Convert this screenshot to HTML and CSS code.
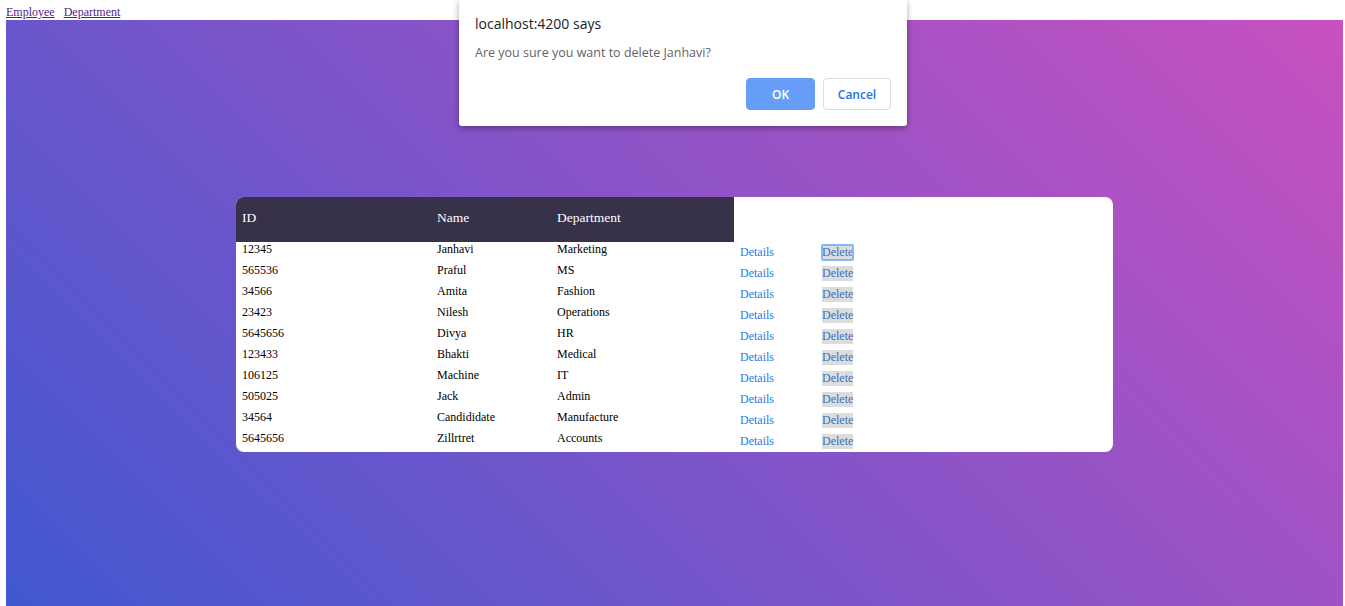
FILE: index.html
```html
<!DOCTYPE html>
<html>
<head>
<meta charset="utf-8">
<link rel="stylesheet" href="styles.css">
</head>
<body>
<nav class="nav">
  <a href="#">Employee</a>
  <a href="#">Department</a>
</nav>
<main class="stage">
  <div class="card">
    <table class="grid">
      <thead>
        <tr><th class="c-id">ID</th><th class="c-name">Name</th><th class="c-dept">Department</th></tr>
      </thead>
      <tbody>
        <tr><td>12345</td><td>Janhavi</td><td>Marketing</td><td class="act"><a href="#">Details</a></td><td class="act"><button class="del focus">Delete</button></td></tr>
        <tr><td>565536</td><td>Praful</td><td>MS</td><td class="act"><a href="#">Details</a></td><td class="act"><button class="del">Delete</button></td></tr>
        <tr><td>34566</td><td>Amita</td><td>Fashion</td><td class="act"><a href="#">Details</a></td><td class="act"><button class="del">Delete</button></td></tr>
        <tr><td>23423</td><td>Nilesh</td><td>Operations</td><td class="act"><a href="#">Details</a></td><td class="act"><button class="del">Delete</button></td></tr>
        <tr><td>5645656</td><td>Divya</td><td>HR</td><td class="act"><a href="#">Details</a></td><td class="act"><button class="del">Delete</button></td></tr>
        <tr><td>123433</td><td>Bhakti</td><td>Medical</td><td class="act"><a href="#">Details</a></td><td class="act"><button class="del">Delete</button></td></tr>
        <tr><td>106125</td><td>Machine</td><td>IT</td><td class="act"><a href="#">Details</a></td><td class="act"><button class="del">Delete</button></td></tr>
        <tr><td>505025</td><td>Jack</td><td>Admin</td><td class="act"><a href="#">Details</a></td><td class="act"><button class="del">Delete</button></td></tr>
        <tr><td>34564</td><td>Candididate</td><td>Manufacture</td><td class="act"><a href="#">Details</a></td><td class="act"><button class="del">Delete</button></td></tr>
        <tr><td>5645656</td><td>Zillrtret</td><td>Accounts</td><td class="act"><a href="#">Details</a></td><td class="act"><button class="del">Delete</button></td></tr>
      </tbody>
    </table>
  </div>
</main>
<div class="dialog">
  <div class="d-title">localhost:4200 says</div>
  <div class="d-msg">Are you sure you want to delete Janhavi?</div>
  <div class="d-btns">
    <button class="btn ok">OK</button>
    <button class="btn cancel">Cancel</button>
  </div>
</div>
</body>
</html>
```
FILE: styles.css
```css
html, body {
  margin: 0;
  padding: 0;
  background: #fff;
  overflow: hidden;
}
body {
  font-family: "Liberation Serif", "Times New Roman", serif;
  font-size: 12px;
  height: 606px;
}
.nav {
  height: 20px;
  padding: 0 6px;
  font-size: 12px;
  line-height: 24px;
}
.nav a {
  color: #551a8b;
  margin-right: 6px;
}
.stage {
  margin: 0 2px 0 6px;
  height: 586px;
  background: linear-gradient(45deg, #4158d0 0%, #c850c0 100%);
  display: flex;
  justify-content: center;
  padding-top: 177px;
  box-sizing: border-box;
}
.card {
  width: 877px;
  height: 255px;
  background: #fff;
  border-radius: 8px;
  overflow: hidden;
  align-self: flex-start;
}
.grid {
  border-collapse: collapse;
  border-spacing: 0;
}
.grid th {
  background: #37324a;
  color: #fff;
  font-weight: normal;
  font-size: 13.5px;
  text-align: left;
  height: 45px;
  padding: 0 6px 3px 6px;
  box-sizing: border-box;
}
.c-id { width: 195px; }
.c-name { width: 120px; }
.c-dept { width: 183px; }
.grid td {
  height: 21px;
  box-sizing: border-box;
  padding: 0 6px;
  vertical-align: top;
  line-height: 14px;
  color: #000;
}
.grid td.act {
  padding-top: 3px;
  line-height: 15px;
}
.grid td.act:nth-child(4) { width: 82px; }
.act a {
  color: #2a7ae2;
  text-decoration: none;
}
.del {
  font-family: "Liberation Serif", "Times New Roman", serif;
  font-size: 12px;
  color: #3d70c8;
  background: #dcdcdc;
  border: none;
  padding: 0;
  height: 15px;
  line-height: 15px;
  display: block;
}
.del.focus {
  outline: 2px solid #8ab4f8;
  outline-offset: -1px;
  border-radius: 1px;
}
.dialog {
  position: absolute;
  left: 459px;
  top: 0;
  width: 448px;
  height: 126px;
  background: #fff;
  border-radius: 0 0 3px 3px;
  box-shadow: 0 2px 6px rgba(0,0,0,0.35);
  font-family: "Open Sans", "Noto Sans", sans-serif;
  box-sizing: border-box;
  padding: 14px 16px 0 16px;
}
.d-title {
  font-size: 14px;
  color: #202124;
  line-height: 20px;
}
.d-msg {
  font-size: 12.5px;
  color: #5f6368;
  margin-top: 10px;
  line-height: 18px;
}
.d-btns {
  display: flex;
  justify-content: flex-end;
  gap: 8px;
  margin-top: 16px;
}
.btn {
  font-family: "Open Sans", "Noto Sans", sans-serif;
  font-size: 12px;
  font-weight: 600;
  height: 32px;
  border-radius: 4px;
  box-sizing: border-box;
}
.ok {
  width: 69px;
  background: #669df6;
  color: #fff;
  border: 1px solid #669df6;
}
.cancel {
  width: 68px;
  background: #fff;
  color: #1a73e8;
  border: 1px solid #dadce0;
}
```
